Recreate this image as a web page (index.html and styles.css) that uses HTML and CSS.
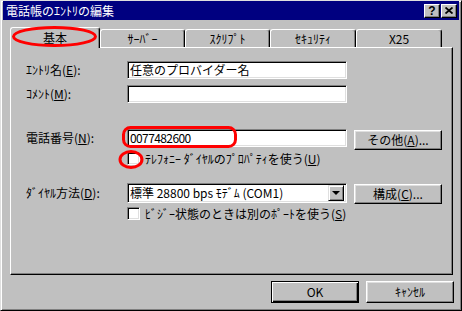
FILE: index.html
```html
<!DOCTYPE html>
<html lang="ja">
<head>
    <meta charset="UTF-8">
    <meta name="viewport" content="width=device-width, initial-scale=1.0">
    <title>電話帳のｴﾝﾄﾘの編集</title>
    <link rel="stylesheet" href="styles.css">
</head>
<body>
    <div class="window">
        <div class="title-bar">
            <span class="title-text">電話帳のｴﾝﾄﾘの編集</span>
            <div class="title-buttons">
                <span class="title-button help">?</span>
                <span class="title-button">
                    <svg width="8" height="7" viewBox="0 0 8 7">
                        <path d="M0.5 0.5 L7.5 6.5 M7.5 0.5 L0.5 6.5" stroke="#000" stroke-width="1.8" fill="none"/>
                    </svg>
                </span>
            </div>
        </div>

        <div class="tabs">
            <div class="tab active">基本</div>
            <div class="tab">ｻｰﾊﾞｰ</div>
            <div class="tab">ｽｸﾘﾌﾟﾄ</div>
            <div class="tab wide">ｾｷｭﾘﾃｨ</div>
            <div class="tab wide">X25</div>
        </div>

        <div class="panel">
            <div class="row row-entry">
                <span class="label">ｴﾝﾄﾘ名(<u>E</u>):</span>
                <div class="field">任意のプロバイダー名</div>
            </div>
            <div class="row row-comment">
                <span class="label">ｺﾒﾝﾄ(<u>M</u>):</span>
                <div class="field"></div>
            </div>
            <div class="row row-phone">
                <span class="label">電話番号(<u>N</u>):</span>
                <div class="field number">0077482600</div>
                <button class="button side">その他(<u>A</u>)...</button>
            </div>
            <div class="check-row check-phone">
                <span class="checkbox"></span>
                <span class="check-text">ﾃﾚﾌｫﾆｰ ﾀﾞｲﾔﾙのﾌﾟﾛﾊﾟﾃｨを使う(<u>U</u>)</span>
            </div>
            <div class="row row-dial">
                <span class="label">ﾀﾞｲﾔﾙ方法(<u>D</u>):</span>
                <div class="field select">
                    <span class="select-text">標準 28800 bps ﾓﾃﾞﾑ (COM1)</span>
                    <span class="select-arrow"><span class="triangle"></span></span>
                </div>
                <button class="button side">構成(<u>C</u>)...</button>
            </div>
            <div class="check-row check-busy">
                <span class="checkbox"></span>
                <span class="check-text">ﾋﾞｼﾞｰ状態のときは別のﾎﾟｰﾄを使う(<u>S</u>)</span>
            </div>
        </div>

        <div class="footer">
            <button class="button default">OK</button>
            <button class="button">ｷｬﾝｾﾙ</button>
        </div>
    </div>

    <!-- 赤い注釈 -->
    <svg class="marks" width="462" height="311" viewBox="0 0 462 311">
        <ellipse cx="54.5" cy="36.5" rx="41" ry="9" fill="none" stroke="#f00" stroke-width="3"/>
        <rect x="123.5" y="127.5" width="112" height="19" rx="7" fill="none" stroke="#f00" stroke-width="3"/>
        <ellipse cx="131" cy="159.5" rx="11" ry="8" fill="none" stroke="#f00" stroke-width="3"/>
    </svg>
</body>
</html>
```

FILE: styles.css
```css
body {
    margin: 0;
    width: 462px;
    height: 311px;
    overflow: hidden;
    position: relative;
    background-color: #c0c0c0;
    font-family: "Noto Sans CJK JP", sans-serif;
    font-size: 12px;
    color: #000;
}

.window {
    box-sizing: border-box;
    width: 462px;
    height: 311px;
    padding: 0 2px 2px 2px;
    background-color: #c0c0c0;
    border: 1px solid;
    border-color: #dfdfdf #000 #000 #dfdfdf;
    box-shadow: inset 1px 1px #fff, inset -1px -1px #808080;
}

.title-bar {
    height: 19px;
    background-color: #000080;
    display: flex;
    align-items: center;
    justify-content: space-between;
}

.title-text {
    color: #fff;
    margin-left: 3px;
    line-height: 14px;
}

.title-buttons {
    display: flex;
    gap: 1px;
    margin-right: 2px;
}

.title-button {
    box-sizing: border-box;
    width: 16px;
    height: 14px;
    display: flex;
    align-items: center;
    justify-content: center;
    background-color: #c0c0c0;
    border: 1px solid;
    border-color: #fff #000 #000 #fff;
    box-shadow: inset -1px -1px #808080;
}

.help {
    font-family: "Liberation Sans", sans-serif;
    font-weight: bold;
    font-size: 12px;
    line-height: 12px;
}

.tabs {
    position: relative;
    z-index: 1;
    display: flex;
    align-items: flex-end;
    height: 20px;
    margin: 7px 0 0 7px;
}

.tab {
    box-sizing: border-box;
    width: 85px;
    height: 18px;
    display: flex;
    align-items: center;
    justify-content: center;
    line-height: 14px;
    background-color: #c0c0c0;
    border-top: 1px solid #fff;
    border-left: 1px solid #fff;
    border-right: 1px solid #000;
    border-radius: 3px 3px 0 0;
    box-shadow: inset -1px 0 #808080;
}

.tab.wide {
    width: 86px;
}

.tab.active {
    width: 90px;
    height: 21px;
    margin-bottom: -1px;
    padding-bottom: 1px;
}

.panel {
    box-sizing: border-box;
    width: 443px;
    height: 228px;
    margin-left: 7px;
    padding: 13px 0 0 15px;
    border: 1px solid;
    border-color: #fff #000 #000 #fff;
    box-shadow: inset -1px -1px #808080;
}

.row {
    display: flex;
    align-items: center;
}

.row-comment {
    margin-top: 6px;
}

.row-phone {
    margin-top: 26px;
    align-items: flex-start;
}

.row-phone .label {
    line-height: 18px;
}

.row-dial {
    margin-top: 18px;
    align-items: flex-start;
}

.row-dial .label {
    line-height: 20px;
}

.label {
    width: 101px;
    line-height: 14px;
    white-space: nowrap;
}

.field {
    box-sizing: border-box;
    width: 220px;
    height: 18px;
    padding-left: 2px;
    line-height: 15px;
    background-color: #fff;
    border: 1px solid;
    border-color: #808080 #fff #fff #808080;
    box-shadow: inset 1px 1px #000, inset -1px -1px #dfdfdf;
    white-space: nowrap;
    overflow: hidden;
}

.number {
    letter-spacing: -0.6px;
}

.select {
    height: 20px;
    display: flex;
    align-items: center;
    padding: 0 2px 0 2px;
}

.select-text {
    flex: 1;
    line-height: 14px;
}

.select-arrow {
    box-sizing: border-box;
    width: 16px;
    height: 16px;
    display: flex;
    align-items: center;
    justify-content: center;
    background-color: #c0c0c0;
    border: 1px solid;
    border-color: #dfdfdf #000 #000 #dfdfdf;
    box-shadow: inset 1px 1px #fff, inset -1px -1px #808080;
}

.triangle {
    width: 0;
    height: 0;
    border-left: 4px solid transparent;
    border-right: 4px solid transparent;
    border-top: 4px solid #000;
}

.button {
    box-sizing: border-box;
    width: 88px;
    height: 22px;
    padding: 0;
    font-family: inherit;
    font-size: 12px;
    line-height: 14px;
    color: #000;
    background-color: #c0c0c0;
    border: 1px solid;
    border-color: #fff #000 #000 #fff;
    box-shadow: inset -1px -1px #808080, inset 1px 1px #dfdfdf;
}

.button.side {
    height: 20px;
    margin: 1px 0 0 7px;
}

.button.default {
    border-color: #000;
    box-shadow: inset 1px 1px #fff, inset -1px -1px #000, inset -2px -2px #808080;
}

.check-row {
    display: flex;
    align-items: center;
    margin-left: 101px;
}

.check-phone {
    margin-top: 2px;
}

.check-busy {
    margin-top: 3px;
}

.checkbox {
    box-sizing: border-box;
    width: 13px;
    height: 13px;
    background-color: #fff;
    border: 1px solid;
    border-color: #808080 #fff #fff #808080;
    box-shadow: inset 1px 1px #000, inset -1px -1px #dfdfdf;
}

.check-text {
    margin-left: 5px;
    line-height: 13px;
    white-space: nowrap;
}

.footer {
    display: flex;
    justify-content: flex-end;
    gap: 7px;
    margin-top: 6px;
    padding-right: 5px;
}

.marks {
    position: absolute;
    top: 0;
    left: 0;
    z-index: 2;
    pointer-events: none;
}
```
